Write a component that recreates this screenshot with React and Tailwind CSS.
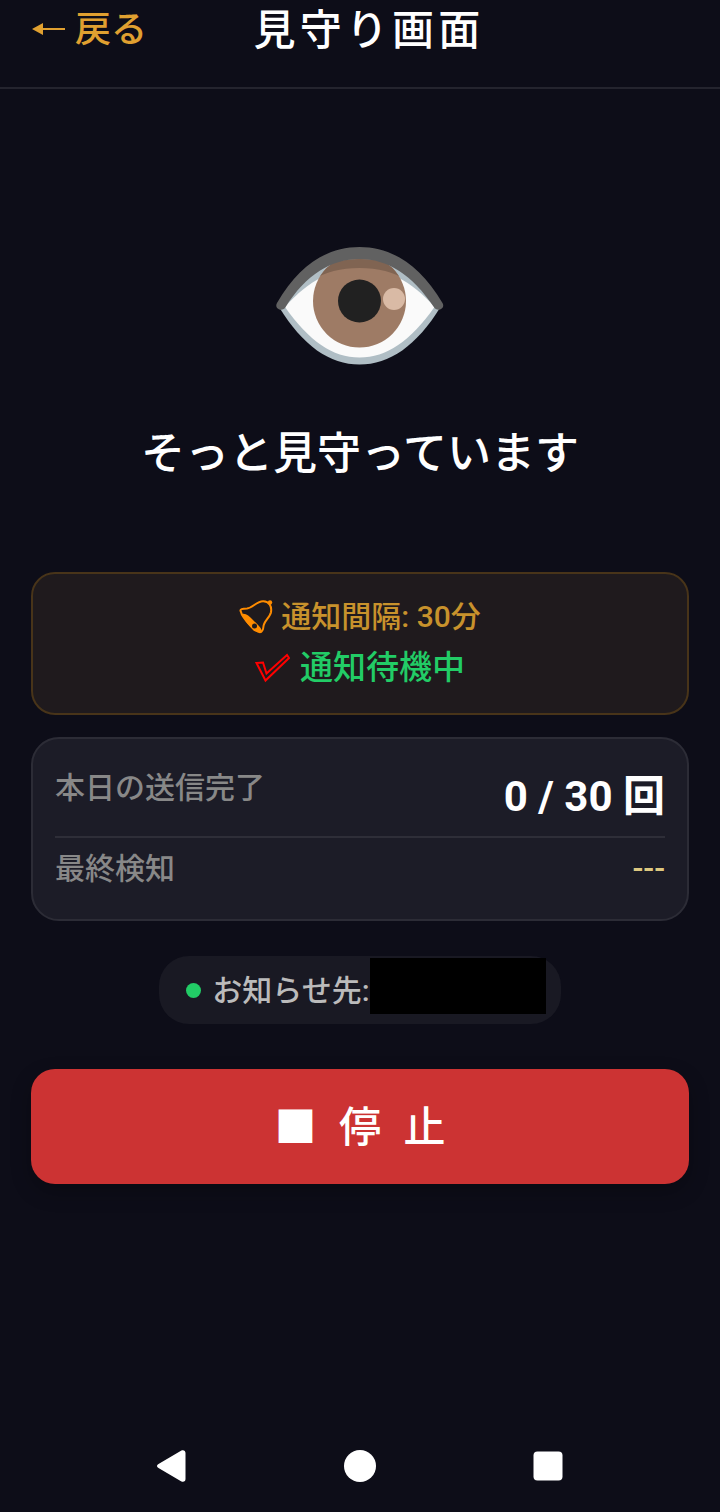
import React, { useState } from 'react';

const EyeIcon = () => (
  <svg className="w-[168px] h-[118px]" viewBox="0 0 168 118" fill="none" aria-hidden="true">
    <path
      d="M3 60C28 20 54 5 83.500 5s56 15 81 55c-24 39-51 57.500-81 57.500S27 99 3 60Z"
      fill="#b0bec5"
    />
    <path
      d="M9 60C33 33 57 21 83.500 21s51 12 75 39c-24 34-48 50.500-75 50.500S33 94 9 60Z"
      fill="#fafafa"
    />
    <clipPath id="lid">
      <path d="M5 60C28 24 54 12 84 12s56 12 79 48v60H5Z" />
    </clipPath>
    <g clipPath="url(#lid)">
      <circle cx="83.500" cy="54" r="46.500" fill="#9e7b65" />
      <clipPath id="iris">
        <circle cx="83.500" cy="54" r="46.500" />
      </clipPath>
      <path
        clipPath="url(#iris)"
        d="M37 33C49 25 65 21 83.500 21S118 25 130 33V0H37Z"
        fill="#806452"
      />
    </g>
    <circle cx="83.500" cy="54" r="21.500" fill="#212121" />
    <circle cx="118" cy="52" r="11" fill="#d9baa5" />
    <path
      d="M1 56C23 18 51 0 83.500 0s60.500 18 83 56c3 5-4 9-8 5C136 27 111 12 83.500 12S30 27 9 61c-4 4-11 0-8-5Z"
      fill="#616161"
    />
  </svg>
);

const BellIcon = () => (
  <svg className="w-[34px] h-[34px]" viewBox="0 0 34 34" fill="none" aria-hidden="true">
    <path
      d="M2 12C0 9 4 8.500 8 8.500c6-.5 9-7 16-7.300 6-.2 9 5 8 11-1 5-7 9-7.500 14-.3 3-.5 6-3.500 6C15 31 3 17 2 12Z"
      stroke="#ff8c00"
      strokeWidth="2"
    />
    <path d="M3 14c4-1 7 2 11 6 3 3 8 7 9 11-2 3-5 1-8 0C10 26 5 20 3 14Z" fill="#ff8c00" />
    <circle cx="15.500" cy="26" r="2.500" fill="#1f1a1d" />
    <circle cx="31" cy="2.500" r="2.200" fill="#ff8c00" />
  </svg>
);

const CheckIcon = () => (
  <svg className="w-[35px] h-[30px]" viewBox="0 0 35 30" fill="none" aria-hidden="true">
    <path d="M1.500 10 8 9.500l3.500 11L32 2l2 3L10.500 27.500Z" stroke="#f00" strokeWidth="2" />
  </svg>
);

const StatRow = ({ label, children }) => (
  <div className="flex items-start justify-between py-2">
    <dt className="text-[30px] leading-[45px] text-[#888888]">{label}</dt>
    {children}
  </div>
);

const App = () => {
  const [running, setRunning] = useState(true);

  return (
    <div className="flex min-h-screen flex-col bg-[#0d0d18] font-medium text-white font-['Roboto','Noto_Sans_CJK_JP',sans-serif]">
      {/* Header */}
      <header className="flex items-center justify-between border-b-2 border-[#24242e] px-[31px] pb-[26px]">
        <button className="flex items-center gap-[10px] text-[36px] leading-[61px] text-[#e0a030]">
          <svg className="h-[16px] w-[34px]" viewBox="0 0 34 16" fill="currentColor" aria-hidden="true">
            <path d="M1 6 12 0v5h22v2H12v5Z" />
          </svg>
          戻る
        </button>
        <h1 className="text-[42px] leading-[61px] tracking-widest">見守り画面</h1>
        <div className="w-[98px]" />
      </header>

      <main className="flex flex-col items-center px-[31px] pt-[158px]">
        <EyeIcon />
        <h2 className="mt-[57px] text-[44px] leading-[64px]">
          {running ? 'そっと見守っています' : '停止しました'}
        </h2>

        {/* Notification status */}
        <section className="mt-[86px] w-full rounded-3xl border-2 border-[#483419] bg-[#1f1a1d] py-5">
          <p className="flex items-center justify-center gap-2 text-[30px] leading-[45px] text-[#c8922c]">
            <BellIcon />
            通知間隔: 30分
          </p>
          <p className="mt-1 flex items-center justify-center gap-[10px] text-[33px] leading-[50px] text-[#22cc66]">
            <CheckIcon />
            通知待機中
          </p>
        </section>

        {/* Counters */}
        <dl className="mt-[22px] w-full divide-y-2 divide-[#2e2e38] rounded-[28px] border-2 border-[#2c2c36] bg-[#1c1c27] px-[22px] pb-5 pt-[18px]">
          <StatRow label="本日の送信完了">
            <dd className="text-[42px] font-bold leading-[63px]">0 / 30 回</dd>
          </StatRow>
          <StatRow label="最終検知">
            <dd className="text-[32px] leading-[45px] text-[#ddc880]">---</dd>
          </StatRow>
        </dl>

        {/* Recipient */}
        <div className="mt-[35px] flex h-[68px] items-center rounded-[30px] bg-[#191923] pl-[27px] pr-[15px]">
          <span className="mr-[11px] size-[15px] rounded-full bg-[#22cc66]" />
          <span className="text-[30px] leading-[45px] text-[#bbbbbb]">お知らせ先:</span>
          <span className="mt-[2px] h-[56px] w-[176px] self-start bg-black" />
        </div>

        <button
          className="mt-[45px] w-full rounded-3xl bg-[#cc3333] pb-[25px] pl-[6px] pt-[27px] text-[42px] leading-[63px] tracking-[6px] shadow-[0_8px_20px_rgba(0,0,0,0.25)]"
          onClick={() => setRunning(false)}
        >
          ■ 停 止
        </button>
      </main>

      {/* System navigation */}
      <nav className="mt-auto flex items-center justify-center gap-[156px] pb-[30px]">
        <button aria-label="Back">
          <svg className="size-8" viewBox="0 0 32 32" fill="#fff">
            <path d="M2.500 14 25 .7c2.500-1.300 4.500 0 4.500 2.300v26c0 2.500-2 3.500-4.500 2.300L2.500 18c-2-1-2-3 0-4Z" />
          </svg>
        </button>
        <button aria-label="Home">
          <svg className="size-8" viewBox="0 0 32 32" fill="#fff">
            <circle cx="16" cy="16" r="16" />
          </svg>
        </button>
        <button aria-label="Recents">
          <svg className="size-8" viewBox="0 0 32 32" fill="#fff">
            <rect x="1.500" y="1.500" width="29" height="29" rx="4" />
          </svg>
        </button>
      </nav>
    </div>
  );
};

export default App;
